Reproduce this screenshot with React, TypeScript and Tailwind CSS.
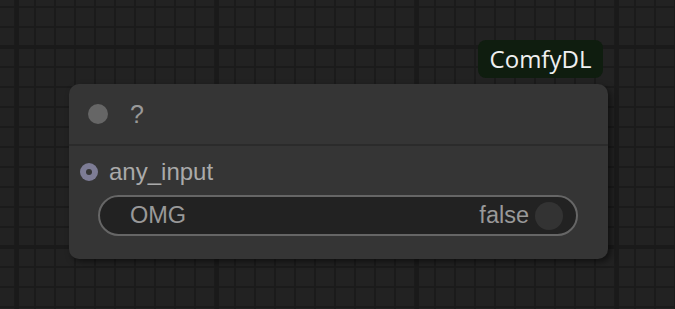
import React from 'react';

const App: React.FC = () => {
  return (
    <div
      className="relative w-[675px] h-[309px] overflow-hidden bg-[#222222] bg-[image:linear-gradient(to_right,#1a1a1a_4px,transparent_4px),linear-gradient(to_bottom,#1a1a1a_4px,transparent_4px),linear-gradient(to_right,#1b1b1b_2px,transparent_2px),linear-gradient(to_bottom,#1b1b1b_2px,transparent_2px)] bg-[size:200px_200px,200px_200px,20px_20px,20px_20px] bg-[position:15px_0,0_45px,14px_0,0_6px]"
      style={{ fontFamily: '"Liberation Sans", Arial, sans-serif' }}
    >
      {/* Group badge */}
      <div className="absolute left-[478px] top-[40px] w-[125px] h-[38px] rounded-[8px] bg-[#0f1d0f] flex items-center justify-center">
        <span className="text-[24px] text-[#f0f0f0] leading-none" style={{ fontFamily: '"Open Sans", "Noto Sans", sans-serif' }}>
          ComfyDL
        </span>
      </div>

      {/* Node */}
      <div className="absolute left-[69px] top-[84px] w-[539px] h-[175px] rounded-[10px] bg-[#353535] shadow-[3px_3px_6px_rgba(0,0,0,0.5)]">
        {/* Title */}
        <div className="h-[62px] flex items-center pl-[19px] border-b-2 border-[#2b2b2b]">
          <div className="w-[20px] h-[20px] rounded-full bg-[#666666]" />
          <span className="ml-[22px] text-[25px] text-[#999999] leading-none">?</span>
        </div>

        {/* Input slot */}
        <div className="h-[40px] mt-[6px] flex items-center pl-[11px]">
          <div className="w-[18px] h-[18px] rounded-full bg-[#7d7c95] flex items-center justify-center">
            <div className="w-[6px] h-[6px] rounded-full bg-[#353535]" />
          </div>
          <span className="ml-[11px] text-[24px] text-[#aaaaaa] leading-none">any_input</span>
        </div>

        {/* Toggle widget */}
        <div className="ml-[29px] mt-[3px] w-[480px] h-[41px] rounded-full border-2 border-[#666666] bg-[#222222] flex items-center pl-[30px] pr-[13px]">
          <span className="text-[23.5px] text-[#999999] leading-none">OMG</span>
          <span className="ml-auto text-[23.5px] text-[#999999] leading-none">false</span>
          <div className="ml-[6px] w-[28px] h-[28px] rounded-full bg-[#333333]" />
        </div>
      </div>
    </div>
  );
};

export default App;
